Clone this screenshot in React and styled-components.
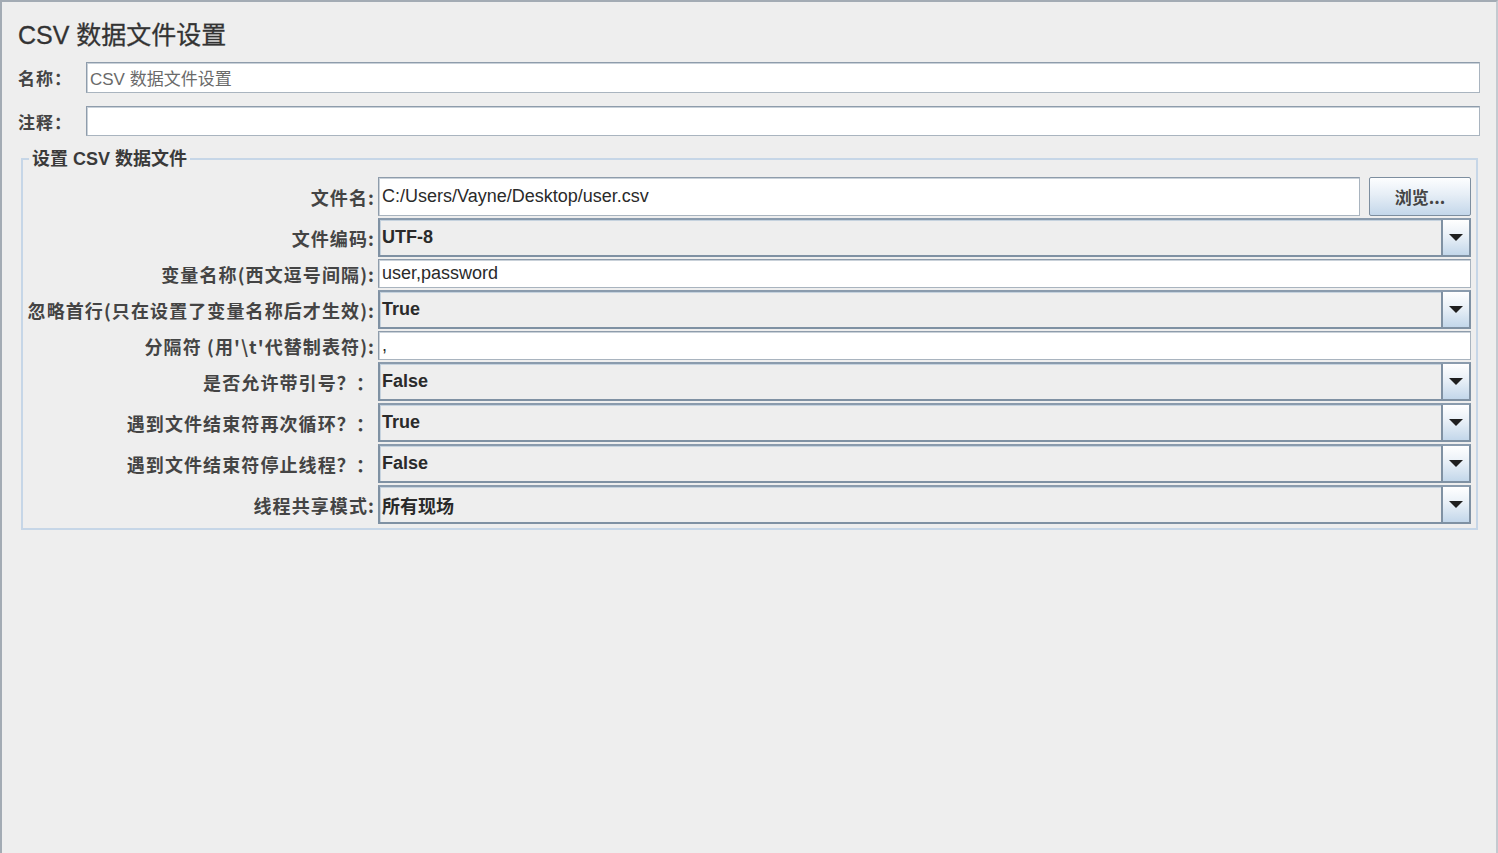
import React from "react";
import styled, { createGlobalStyle } from "styled-components";

const GlobalStyle = createGlobalStyle`
  html, body {
    margin: 0;
    padding: 0;
    background: #eeeeee;
  }
`;

const Page = styled.div`
  box-sizing: border-box;
  width: 1498px;
  height: 853px;
  background: #eeeeee;
  border-top: 2px solid #a3abb4;
  border-left: 2px solid #a3abb4;
  border-right: 2px solid #c4cad0;
  padding: 0 16px 0 16px;
  font-family: "Liberation Sans", "Noto Sans CJK SC", sans-serif;
  color: #333;
`;

const Title = styled.h1`
  margin: 0;
  padding-top: 18px;
  height: 30px;
  line-height: 30px;
  font-size: 25px;
  font-weight: normal;
  color: #333;
  font-family: "Liberation Sans", "Noto Sans CJK SC", sans-serif;
  -webkit-text-stroke: 0.3px #333;
`;

const TopRow = styled.div`
  display: grid;
  grid-template-columns: 68px 1fr;
  align-items: center;
  margin-top: ${p => p.$mt}px;
`;

const TopLabel = styled.label`
  font-family: "Noto Sans CJK SC", sans-serif;
  font-size: 17px;
  font-weight: 700;
  letter-spacing: 1px;
  color: #444;
`;

const TextBox = styled.div`
  box-sizing: border-box;
  height: ${p => p.$h}px;
  background: #ffffff;
  border: 1px solid #8e9cab;
  border-right-color: #a9b4bf;
  border-bottom-color: #a9b4bf;
  box-shadow: inset 1px 1px 0 #c9d1d9;
  display: flex;
  align-items: center;
  padding-left: 3px;
  font-size: ${p => p.$fs || 18}px;
  color: ${p => p.$muted ? "#6a6a6a" : "#2a2a2a"};
  font-family: "Liberation Sans", "Noto Sans CJK SC", sans-serif;
  white-space: nowrap;
  overflow: hidden;
  flex: 1;
`;

const Group = styled.fieldset`
  margin: 13px 2px 0 3px;
  padding: 8px 5px 4px 0;
  border: 2px solid #c6d6e7;
  min-width: 0;
`;

const Legend = styled.legend`
  margin-left: 6px;
  padding: 0 3px;
  font-family: "Liberation Sans", "Noto Sans CJK SC", sans-serif;
  font-size: 18px;
  font-weight: 700;
  color: #3a3a3a;
  line-height: 20px;
`;

const Rows = styled.div`
  display: grid;
  grid-template-columns: 352px 1fr;
  column-gap: 3px;
  row-gap: 2px;
  align-items: center;
`;

const Label = styled.label`
  text-align: right;
  font-family: "Noto Sans CJK SC", sans-serif;
  font-size: 18px;
  font-weight: 700;
  letter-spacing: 1.1px;
  color: #444;
  white-space: nowrap;
`;

const FileLine = styled.div`
  display: flex;
  gap: 9px;
  align-items: center;
`;

const BrowseButton = styled.button`
  box-sizing: border-box;
  width: 102px;
  height: 39px;
  border: 1px solid #7d8e9f;
  border-radius: 2px;
  background: linear-gradient(#fdfeff, #e6eef6 45%, #c4d7ea);
  font-family: "Noto Sans CJK SC", sans-serif;
  font-size: 17px;
  font-weight: 700;
  color: #444;
  padding: 0;
`;

const Combo = styled.div`
  box-sizing: border-box;
  height: 39px;
  display: flex;
  border: 2px solid #7f91a3;
  border-top-color: #8a9bad;
  background: #eeeeee;
  box-shadow: inset 1px 1px 0 #c5d2de;
`;

const ComboValue = styled.div`
  flex: 1;
  display: flex;
  align-items: center;
  padding-left: 2px;
  font-family: ${p => p.$cjk ? '"Noto Sans CJK SC", sans-serif' : '"Liberation Sans", sans-serif'};
  font-size: 18px;
  font-weight: 700;
  color: #2a2a2a;
`;

const ArrowButton = styled.div`
  width: 26px;
  border-left: 2px solid #7f91a3;
  background: linear-gradient(#ffffff, #e9f0f7 45%, #c3d7ea);
  display: flex;
  align-items: center;
  justify-content: center;
`;

const Arrow = () => (
  <svg width="14" height="8" viewBox="0 0 14 8">
    <path d="M0 0 H14 L7 7 Z" fill="#1f1f1f" />
  </svg>
);

const Select = ({ value, cjk }) => (
  <Combo>
    <ComboValue $cjk={cjk}>{value}</ComboValue>
    <ArrowButton><Arrow /></ArrowButton>
  </Combo>
);

export default function App() {
  return (
    <Page>
      <GlobalStyle />
      <Title>CSV 数据文件设置</Title>
      <TopRow $mt={12}>
        <TopLabel>名称：</TopLabel>
        <TextBox $h={31} $fs={17} $muted>CSV 数据文件设置</TextBox>
      </TopRow>
      <TopRow $mt={13}>
        <TopLabel>注释：</TopLabel>
        <TextBox $h={30} />
      </TopRow>
      <Group>
        <Legend>设置 CSV 数据文件</Legend>
        <Rows>
          <Label>文件名:</Label>
          <FileLine>
            <TextBox $h={39}>C:/Users/Vayne/Desktop/user.csv</TextBox>
            <BrowseButton>浏览...</BrowseButton>
          </FileLine>

          <Label>文件编码:</Label>
          <Select value="UTF-8" />

          <Label>变量名称(西文逗号间隔):</Label>
          <TextBox $h={29}>user,password</TextBox>

          <Label>忽略首行(只在设置了变量名称后才生效):</Label>
          <Select value="True" />

          <Label>分隔符 (用'\t'代替制表符):</Label>
          <TextBox $h={29}>,</TextBox>

          <Label>是否允许带引号？：</Label>
          <Select value="False" />

          <Label>遇到文件结束符再次循环？：</Label>
          <Select value="True" />

          <Label>遇到文件结束符停止线程？：</Label>
          <Select value="False" />

          <Label>线程共享模式:</Label>
          <Select value="所有现场" cjk />
        </Rows>
      </Group>
    </Page>
  );
}
